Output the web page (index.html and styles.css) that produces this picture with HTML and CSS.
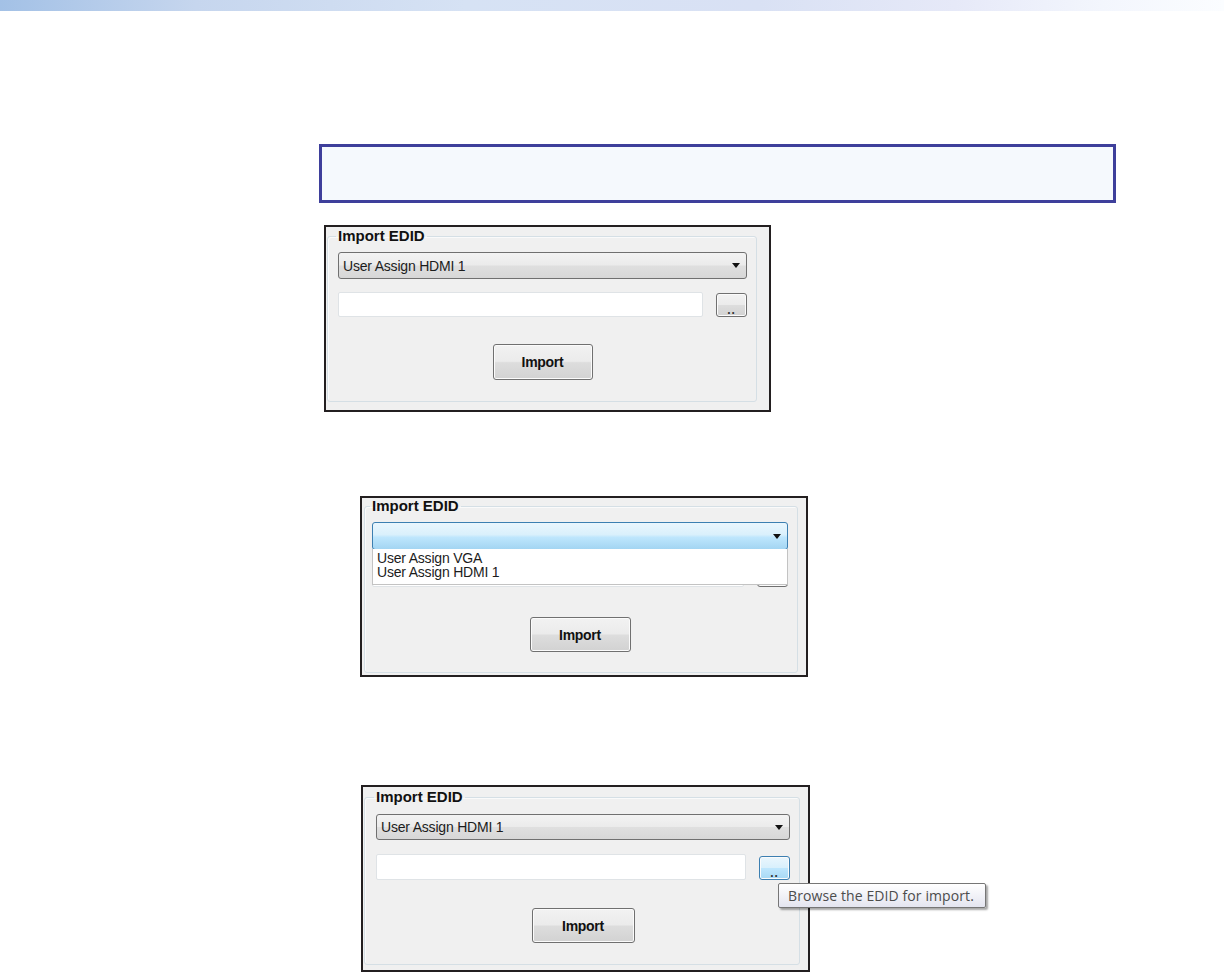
FILE: index.html
```html
<!DOCTYPE html>
<html>
<head>
    <title>Import EDID</title>
    <meta name="viewport" content="width=device-width, initial-scale=1">
    <link rel="stylesheet" href="styles.css">
</head>

<body>
    <div class="topbar"></div>

    <div class="page">
        <div class="note"></div>

        <!-- default state -->
        <div class="shot shot-1">
            <fieldset class="group">
                <legend>Import EDID</legend>
                <div class="combo">
                    <span class="combo-text">User Assign HDMI 1</span>
                    <span class="arrow"></span>
                </div>
                <div class="file-row">
                    <div class="textbox"></div>
                    <div class="browse-wrap">
                        <button type="button" class="btn browse">..</button>
                    </div>
                </div>
                <div class="actions">
                    <button type="button" class="btn import">Import</button>
                </div>
            </fieldset>
        </div>

        <!-- list opened -->
        <div class="shot shot-2">
            <fieldset class="group">
                <legend>Import EDID</legend>
                <div class="combo combo-open">
                    <span class="combo-text"></span>
                    <span class="arrow"></span>
                    <ul class="combo-list">
                        <li>User Assign VGA</li>
                        <li>User Assign HDMI 1</li>
                    </ul>
                </div>
                <div class="file-row">
                    <div class="textbox"></div>
                    <div class="browse-wrap">
                        <button type="button" class="btn browse">..</button>
                    </div>
                </div>
                <div class="actions">
                    <button type="button" class="btn import">Import</button>
                </div>
            </fieldset>
        </div>

        <!-- hover on browse -->
        <div class="shot shot-3">
            <fieldset class="group">
                <legend>Import EDID</legend>
                <div class="combo">
                    <span class="combo-text">User Assign HDMI 1</span>
                    <span class="arrow"></span>
                </div>
                <div class="file-row">
                    <div class="textbox"></div>
                    <div class="browse-wrap">
                        <button type="button" class="btn browse hover">..</button>
                        <div class="tooltip">Browse the EDID for import.</div>
                    </div>
                </div>
                <div class="actions">
                    <button type="button" class="btn import">Import</button>
                </div>
            </fieldset>
        </div>
    </div>
</body>
</html>
```

FILE: styles.css
```css
html, body {
    margin: 0;
    padding: 0;
    background: #fff;
    font-family: 'Liberation Sans', Arial, sans-serif;
    color: #1c1c1c;
}

.topbar {
    height: 11px;
    background: linear-gradient(to right, #a3c1e6 0%, #c6d6ee 16%, #d6e2f4 38%, #d9e1f4 62%, #e6e9f8 78%, #f3f6fd 90%, #fbfdff 100%);
}

.page {
    display: flex;
    flex-direction: column;
    align-items: flex-start;
}

.note {
    margin: 133px 0 0 319px;
    width: 797px;
    height: 59px;
    box-sizing: border-box;
    border: 3px solid #3e3f9b;
    background: #f5f9fd;
}

/* screenshot frames */
.shot {
    box-sizing: border-box;
    border: 2px solid #231f20;
    background: #f0f0f0;
    display: flex;
}

.shot-1 {
    width: 447px;
    margin: 22px 0 0 324px;
    padding: 1px 12px 8px 1px;
}

.shot-2 {
    width: 448px;
    margin: 84px 0 0 360px;
    padding: 0 8px 2px 2px;
}

.shot-3 {
    width: 449px;
    margin: 108px 0 0 361px;
    padding: 2px 8px 5px 1px;
}

.group {
    flex: 1;
    min-width: 0;
    margin: 0;
    border: 1px solid #d5dfe5;
    border-radius: 3px;
    box-shadow: inset 1px 1px 0 #fafafa;
}

.shot-1 .group { padding: 8px 9px 21px 10px; }
.shot-2 .group { padding: 8px 9px 20px 7px; }
.shot-3 .group { padding: 9px 9px 21px 11px; }

.group legend {
    font-size: 15px;
    font-weight: bold;
    line-height: 16px;
    padding: 0 2px;
    margin-left: -2px;
    color: #111;
}

/* combo box */
.combo {
    position: relative;
    height: 27px;
    box-sizing: border-box;
    border: 1px solid #707070;
    border-radius: 3px;
    background: linear-gradient(#f3f3f3 0%, #ebebeb 48%, #dfdfdf 52%, #d7d7d7 100%);
    display: flex;
    align-items: center;
    padding: 0 6px 0 4px;
}

.shot-2 .combo { height: 28px; }
.shot-3 .combo { height: 26px; }

.combo-text {
    flex: 1;
    font-size: 14px;
    letter-spacing: -0.2px;
}

.arrow {
    width: 0;
    height: 0;
    border-left: 4px solid transparent;
    border-right: 4px solid transparent;
    border-top: 5px solid #111;
}

.combo-open {
    border-color: #3c7fb1;
    background: linear-gradient(#eaf6fd 0%, #d9f0fc 45%, #bee6fd 55%, #a3d5f2 100%);
}

.combo-list {
    position: absolute;
    top: 100%;
    left: -1px;
    right: -1px;
    height: 36px;
    box-sizing: border-box;
    margin: 0;
    padding: 2px 0 0 4px;
    list-style: none;
    background: #fff;
    border: 1px solid #c3c3c3;
    border-top: none;
    z-index: 2;
}

.combo-list li {
    font-size: 14px;
    line-height: 14px;
    letter-spacing: -0.2px;
    color: #1c1c1c;
}

/* path row */
.file-row {
    display: flex;
    gap: 13px;
    align-items: flex-start;
    margin-top: 13px;
}

.shot-2 .file-row { margin-top: 12px; }
.shot-3 .file-row { margin-top: 14px; }

.textbox {
    flex: 1;
    height: 25px;
    box-sizing: border-box;
    background: #fff;
    border: 1px solid #dfe3e6;
    border-radius: 2px;
}

.shot-3 .textbox { height: 26px; }

.browse-wrap {
    position: relative;
    margin-top: 1px;
}

.shot-3 .browse-wrap { margin-top: 2px; }

.btn {
    box-sizing: border-box;
    border: 1px solid #707070;
    border-radius: 3px;
    background: linear-gradient(#f2f2f2 0%, #ebebeb 48%, #dddddd 52%, #d2d2d2 100%);
    box-shadow: inset 0 0 0 1px #fbfbfb;
    font-family: 'Liberation Sans', Arial, sans-serif;
    color: #111;
    padding: 0;
    margin: 0;
}

.browse {
    display: block;
    width: 31px;
    height: 24px;
    font-size: 12px;
    font-weight: bold;
    line-height: 12px;
    padding-top: 9px;
    letter-spacing: 1px;
    color: #333;
}

.btn.hover {
    border-color: #3c7fb1;
    background: linear-gradient(#eaf6fd 0%, #d9f0fc 48%, #bee6fd 52%, #a7d9f5 100%);
}

.actions {
    display: flex;
    justify-content: center;
    margin-top: 27px;
}

.shot-2 .actions { margin-top: 30px; }
.shot-3 .actions { margin-top: 28px; }

.import {
    width: 100px;
    height: 36px;
    font-size: 14px;
    font-weight: bold;
    letter-spacing: -0.3px;
}

.shot-2 .import { width: 101px; height: 35px; }
.shot-3 .import { width: 103px; height: 35px; }

/* tooltip over the hovered button */
.tooltip {
    position: absolute;
    left: 19px;
    top: calc(100% + 3px);
    white-space: nowrap;
    font-family: 'Open Sans', 'Noto Sans', sans-serif;
    font-size: 14px;
    letter-spacing: 0.1px;
    line-height: 23px;
    color: #4c4c4c;
    padding: 0 11px 0 9px;
    border: 1px solid #767676;
    border-radius: 2px;
    background: linear-gradient(#ffffff, #e4e5f0);
    box-shadow: 2px 2px 2px rgba(0, 0, 0, 0.35);
    z-index: 3;
}
```
